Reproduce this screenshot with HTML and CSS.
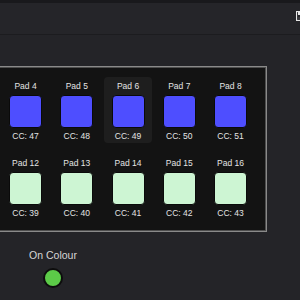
FILE: index.html
```html
<!DOCTYPE html>
<html lang="en">
  <head>
    <meta charset="UTF-8" />
    <meta name="viewport" content="width=device-width, initial-scale=1.0" />
    <title>Pad Mapper</title>
    <link rel="stylesheet" href="styles.css">
  </head>
  <body>
    <div class="topbar"></div>
    <div class="header">
      <!-- save button, runs off the right edge -->
      <svg class="save-icon" width="10" height="10" viewBox="0 0 10 10">
        <rect x="0.5" y="0.5" width="9" height="9" fill="none" stroke="#e6e6e6" stroke-width="1.2" />
        <rect x="2" y="1" width="5" height="3" fill="#e6e6e6" />
        <rect x="2" y="6" width="6" height="3" fill="#3a3a3e" />
      </svg>
    </div>

    <div class="main">
      <div class="panel">
        <div class="pad-grid">
          <div class="pad"><span class="pad-name">Pad 4</span><div class="swatch on"></div><span class="pad-cc">CC: 47</span></div>
          <div class="pad"><span class="pad-name">Pad 5</span><div class="swatch on"></div><span class="pad-cc">CC: 48</span></div>
          <div class="pad selected"><span class="pad-name">Pad 6</span><div class="swatch on"></div><span class="pad-cc">CC: 49</span></div>
          <div class="pad"><span class="pad-name">Pad 7</span><div class="swatch on"></div><span class="pad-cc">CC: 50</span></div>
          <div class="pad"><span class="pad-name">Pad 8</span><div class="swatch on"></div><span class="pad-cc">CC: 51</span></div>

          <div class="pad"><span class="pad-name">Pad 12</span><div class="swatch off"></div><span class="pad-cc">CC: 39</span></div>
          <div class="pad"><span class="pad-name">Pad 13</span><div class="swatch off"></div><span class="pad-cc">CC: 40</span></div>
          <div class="pad"><span class="pad-name">Pad 14</span><div class="swatch off"></div><span class="pad-cc">CC: 41</span></div>
          <div class="pad"><span class="pad-name">Pad 15</span><div class="swatch off"></div><span class="pad-cc">CC: 42</span></div>
          <div class="pad"><span class="pad-name">Pad 16</span><div class="swatch off"></div><span class="pad-cc">CC: 43</span></div>
        </div>
      </div>

      <div class="controls">
        <div class="control">
          <span class="control-label">On Colour</span>
          <div class="colour-dot"></div>
        </div>
      </div>
    </div>
  </body>
</html>
```

FILE: styles.css
```css
body {
  margin: 0;
  width: 300px;
  height: 300px;
  overflow: hidden;
  background-color: #242428;
  color: #e2e2e2;
  font-family: "Liberation Sans", Arial, sans-serif;
}

.topbar {
  height: 3px;
  background-color: #19191c;
}

.header {
  height: 31px;
  display: flex;
  justify-content: flex-end;
  align-items: center;
  background-color: #252529;
  border-bottom: 1px solid #1c1c1f;
}

.save-icon {
  margin-right: -6px;
  margin-top: -6px;
  flex-shrink: 0;
}

.main {
  padding-top: 31px;
}

/* the panel carries on past the left edge of the window */
.panel {
  width: max-content;
  margin-left: -20px;
  padding: 9px 10px 10px 19.5px;
  background-color: #131313;
  border: 1px solid #8a8a8a;
  box-shadow: inset 0 0 0 1px #4e4e4e;
}

.pad-grid {
  display: grid;
  grid-template-columns: repeat(5, 48px);
  column-gap: 3.25px;
  row-gap: 11px;
  margin: 1px;
}

.pad {
  display: flex;
  flex-direction: column;
  align-items: center;
  padding: 4px 0 1px;
  border-radius: 4px;
}

.pad.selected {
  background-color: #1e1e1e;
}

.pad-name,
.pad-cc {
  font-size: 8.5px;
  line-height: 11px;
  color: #e4e4e4;
}

.swatch {
  box-sizing: border-box;
  width: 33px;
  height: 33px;
  margin: 3px 0;
  border-radius: 4px;
  border: 1px solid #0a0a0a;
}

.swatch.on {
  background-color: #4e4eff;
}

.swatch.off {
  background-color: #cdf5d3;
}

.controls {
  display: flex;
  padding-left: 23px;
}

.control {
  width: 60px;
  display: flex;
  flex-direction: column;
  align-items: center;
  margin-top: 17px;
}

.control-label {
  font-size: 10.5px;
  line-height: 13px;
  color: #d6d6d6;
}

.colour-dot {
  box-sizing: border-box;
  width: 20px;
  height: 20px;
  margin-top: 6px;
  border-radius: 50%;
  background-color: #5ccb48;
  border: 2px solid #0d0d0d;
}
```
